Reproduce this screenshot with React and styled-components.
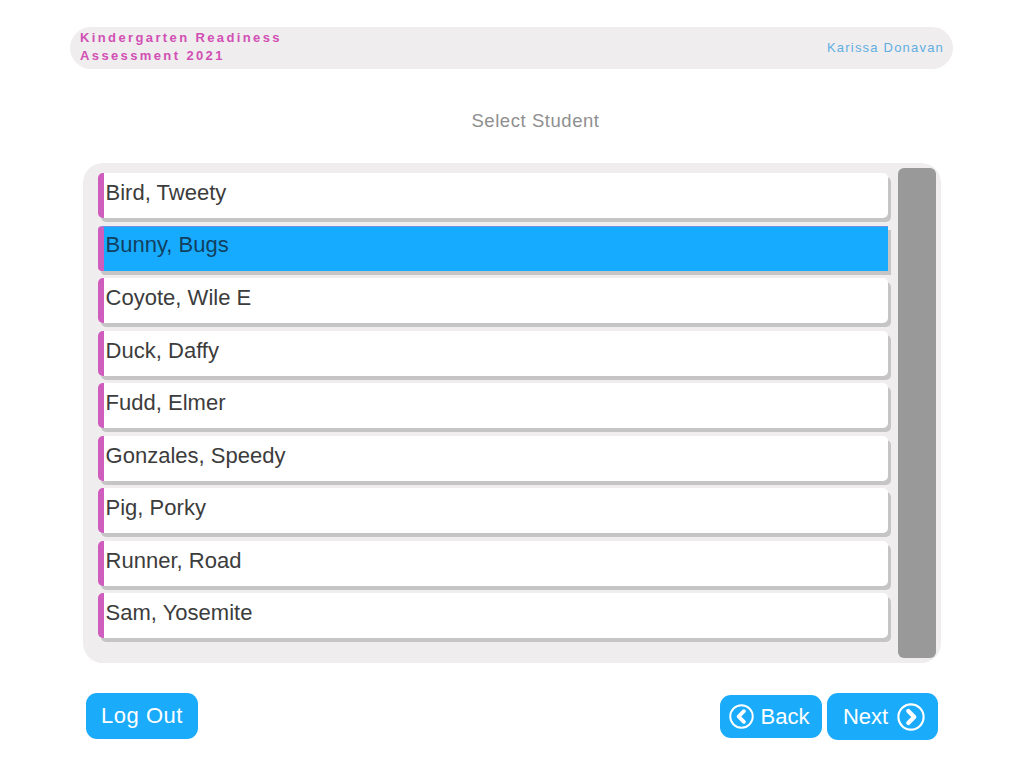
import React from "react";
import styled, { createGlobalStyle } from "styled-components";

const Global = createGlobalStyle`
  html, body { margin: 0; padding: 0; background: #fff; }
  body { font-family: "Liberation Sans", Arial, sans-serif; }
`;

const Page = styled.div`
  width: 1024px;
  height: 768px;
  overflow: hidden;
  display: flex;
  flex-direction: column;
  align-items: flex-start;
  padding-top: 27px;
  box-sizing: border-box;
`;

const Header = styled.header`
  width: 883px;
  height: 42px;
  margin-left: 70px;
  padding: 0 9px 0 10px;
  box-sizing: border-box;
  border-radius: 21px;
  background: #efedee;
  display: flex;
  align-items: center;
  justify-content: space-between;
`;

const AppTitle = styled.div`
  color: #d24fb4;
  font-size: 13px;
  line-height: 17.5px;
  font-weight: 700;
  letter-spacing: 2.38px;
  margin-top: -3px;
`;

const UserName = styled.div`
  color: #62aee2;
  font-size: 13px;
  letter-spacing: 1.2px;
  margin-top: -2px;
`;

const Heading = styled.h1`
  width: 100%;
  margin: 41px 0 31px;
  padding-left: 47px;
  box-sizing: border-box;
  text-align: center;
  color: #8f8f8f;
  font-size: 18.5px;
  line-height: 22px;
  font-weight: 400;
  letter-spacing: 0.55px;
`;

const Panel = styled.main`
  width: 858px;
  height: 500px;
  margin-left: 83px;
  padding: 5px 5px 5px 15px;
  box-sizing: border-box;
  background: #efedee;
  border-radius: 20px;
  display: flex;
  justify-content: space-between;
`;

const List = styled.ul`
  list-style: none;
  margin: 0;
  padding: 5px 0 0;
  width: 793px;
  display: flex;
  flex-direction: column;
  gap: 7.5px;
`;

const Row = styled.li`
  height: 45px;
  width: 790px;
  box-sizing: border-box;
  border-left: 6px solid #cf5dbd;
  border-top: ${(p) => (p.$selected ? "1px solid #6f8fe0" : "0")};
  border-radius: ${(p) => (p.$selected ? "4px 0 0 4px" : "5px")};
  background: ${(p) => (p.$selected ? "#17abff" : "#fff")};
  box-shadow: 3px 4px 0 #c6c5c6;
  display: flex;
  align-items: center;
  padding: 0 0 ${(p) => (p.$selected ? "7px" : "5px")} 1.5px;
  color: ${(p) => (p.$selected ? "#11405f" : "#3c3c3c")};
  font-size: 22px;
  letter-spacing: 0.02px;
`;

const ScrollTrack = styled.div`
  width: 38px;
  height: 490px;
  background: #999999;
  border-radius: 6px;
`;

const Footer = styled.footer`
  width: 852px;
  height: 47px;
  margin: 30px 0 0 86px;
  display: flex;
  align-items: flex-start;
`;

const Button = styled.button`
  height: ${(p) => p.$h}px;
  width: ${(p) => p.$w}px;
  margin-top: ${(p) => p.$top || 0}px;
  border: 0;
  padding: 0 ${(p) => p.$padRight || 0}px 0 ${(p) => p.$padLeft || 0}px;
  border-radius: 11px;
  background: #1aabfb;
  color: #fff;
  font-family: inherit;
  font-size: 22px;
  letter-spacing: ${(p) => p.$track || "0"};
  display: flex;
  align-items: center;
  justify-content: center;
  gap: ${(p) => p.$gap || 0}px;
`;

const Spacer = styled.div`
  flex: 1;
`;

const NavGap = styled.div`
  width: 5px;
`;

const Arrow = ({ dir, size }) => (
  <svg width={size} height={size} viewBox="0 0 26 26" fill="none">
    <circle cx="13" cy="13" r="11.7" stroke="#fff" strokeWidth="2" />
    <path
      d={dir === "left" ? "M15.5 7.5 L10 13 L15.5 18.5" : "M10.5 7.5 L16 13 L10.5 18.5"}
      stroke="#fff"
      strokeWidth="4"
      strokeLinecap="round"
      strokeLinejoin="round"
    />
  </svg>
);

const students = [
  "Bird, Tweety",
  "Bunny, Bugs",
  "Coyote, Wile E",
  "Duck, Daffy",
  "Fudd, Elmer",
  "Gonzales, Speedy",
  "Pig, Porky",
  "Runner, Road",
  "Sam, Yosemite",
];

export default function App() {
  return (
    <Page>
      <Global />
      <Header>
        <AppTitle>
          Kindergarten Readiness
          <br />
          Assessment 2021
        </AppTitle>
        <UserName>Karissa Donavan</UserName>
      </Header>
      <Heading>Select Student</Heading>
      <Panel>
        <List>
          {students.map((s) => (
            <Row key={s} $selected={s === "Bunny, Bugs"}>
              {s}
            </Row>
          ))}
        </List>
        <ScrollTrack />
      </Panel>
      <Footer>
        <Button $w={112} $h={46} $track="0.5px">Log Out</Button>
        <Spacer />
        <Button $w={102} $h={43} $top={2} $gap={7} $padRight={4}>
          <Arrow dir="left" size={25} />
          Back
        </Button>
        <NavGap />
        <Button $w={111} $h={47} $gap={9} $padLeft={3}>
          Next
          <Arrow dir="right" size={28} />
        </Button>
      </Footer>
    </Page>
  );
}
